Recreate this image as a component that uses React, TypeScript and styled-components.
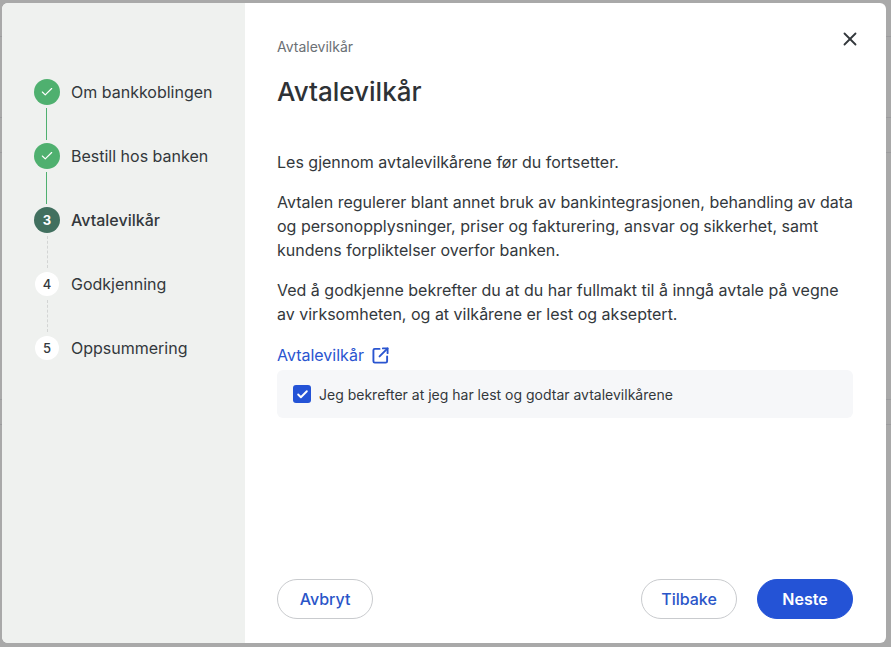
import React from "react";
import styled, { createGlobalStyle } from "styled-components";
import { Check, X } from "lucide-react";

const Global = createGlobalStyle`
  html, body { margin: 0; padding: 0; height: 100%; }
  body { background: #a9a9a9; font-family: Inter, "Liberation Sans", sans-serif; overflow: hidden; }
`;

const line = (y: number) =>
  `linear-gradient(#9c9c9e, #9c9c9e) 0 ${y}px / 100% 1px no-repeat`;

const Backdrop = styled.div`
  width: 891px;
  height: 647px;
  box-sizing: border-box;
  padding: 3px 5px 4px 2px;
  display: flex;
  background: ${[36, 117, 152, 399, 424].map(line).join(", ")}, #a9a9a9;
`;

const Modal = styled.div`
  flex: 1;
  display: flex;
  background: #fff;
  border-radius: 6px;
  overflow: hidden;
  position: relative;
`;

const Sidebar = styled.aside`
  width: 243px;
  flex: none;
  background: #eff1ef;
  box-sizing: border-box;
  padding: 76px 0 0 32px;
  display: flex;
  flex-direction: column;
`;

const Step = styled.div`
  display: flex;
  gap: 11px;
  height: 64px;
`;

const Rail = styled.div`
  width: 26px;
  display: flex;
  flex-direction: column;
  align-items: center;
`;

type Status = "done" | "current" | "todo";

const DotSlot = styled.div`
  width: 26px;
  height: 26px;
  flex: none;
  display: flex;
  align-items: center;
  justify-content: center;
`;

const Dot = styled.div<{ $status: Status }>`
  width: ${(p) => (p.$status === "todo" ? 24 : 26)}px;
  height: ${(p) => (p.$status === "todo" ? 24 : 26)}px;
  box-sizing: border-box;
  border-radius: 50%;
  display: flex;
  align-items: center;
  justify-content: center;
  font-size: 13px;
  font-weight: ${(p) => (p.$status === "current" ? 700 : 500)};
  color: ${(p) => (p.$status === "todo" ? "#33383c" : "#fff")};
  background: ${(p) =>
    p.$status === "done" ? "#4fb06f" : p.$status === "current" ? "#41705f" : "#fff"};
`;

const SolidConnector = styled.div`
  flex: 1;
  margin: 3px 0;
  width: 2px;
  background: linear-gradient(90deg, #4fb06f 50%, transparent 50%);
`;

const DashedConnector = styled.div`
  flex: 1;
  margin: 3px 0;
  width: 0;
  border-left: 1px dashed #d3d5d4;
`;

const StepLabel = styled.div<{ $current: boolean }>`
  font-size: 16px;
  line-height: 26px;
  color: #33383c;
  font-weight: ${(p) => (p.$current ? 500 : 400)};
`;

const Main = styled.main`
  flex: 1;
  box-sizing: border-box;
  padding: 36px 33px 24px 32px;
  display: flex;
  flex-direction: column;
`;

const Eyebrow = styled.div`
  font-size: 14px;
  line-height: 16px;
  color: #6b7075;
`;

const Title = styled.h1`
  margin: 20px 0 0;
  font-size: 26px;
  line-height: 34px;
  font-weight: 500;
  color: #2e3236;
`;

const Body = styled.div`
  margin: 41px -2px 0 0;
  display: flex;
  flex-direction: column;
  gap: 16px;
`;

const Paragraph = styled.p`
  margin: 0;
  font-size: 16px;
  line-height: 24px;
  color: #33383c;
`;

const TermsLink = styled.a`
  margin-top: 17px;
  display: flex;
  align-items: center;
  gap: 8px;
  font-size: 16px;
  line-height: 24px;
  color: #2a55d0;
`;

const ConfirmBox = styled.label`
  margin-top: 3px;
  height: 48px;
  box-sizing: border-box;
  padding: 0 16px;
  display: flex;
  align-items: center;
  gap: 8px;
  background: #f6f7f9;
  border-radius: 6px;
  font-size: 14px;
  color: #33383c;
`;

const CheckBox = styled.span`
  width: 18px;
  height: 18px;
  border-radius: 3px;
  background: #2453d6;
  display: flex;
  align-items: center;
  justify-content: center;
  color: #fff;
`;

const Footer = styled.div`
  margin-top: auto;
  display: flex;
  align-items: center;
  gap: 20px;
`;

const Button = styled.button<{ $primary?: boolean }>`
  width: 96px;
  height: 40px;
  border-radius: 20px;
  font-family: inherit;
  font-size: 16px;
  padding: 0;
  border: 1px solid ${(p) => (p.$primary ? "#2453d6" : "#c9cbce")};
  background: ${(p) => (p.$primary ? "#2453d6" : "#fff")};
  color: ${(p) => (p.$primary ? "#fff" : "#2a55c8")};
  font-weight: ${(p) => (p.$primary ? 600 : 500)};
`;

const Spacer = styled.div`
  flex: 1;
`;

const Close = styled.button`
  position: absolute;
  top: 24px;
  right: 24px;
  width: 24px;
  height: 24px;
  padding: 0;
  border: 0;
  background: none;
  color: #33383c;
  display: flex;
  align-items: center;
  justify-content: center;
`;

const OpenIcon = () => (
  <svg
    width="17"
    height="17"
    viewBox="0 0 18 18"
    fill="none"
    stroke="currentColor"
    strokeWidth="2"
    strokeLinecap="round"
    strokeLinejoin="round"
  >
    <path d="M8 2H3a1.5 1.5 0 0 0-1.5 1.5v11.5A1.5 1.5 0 0 0 3 16.5h11.5a1.5 1.5 0 0 0 1.5-1.5V10" />
    <path d="M11.5 1.5h5v5" />
    <path d="M16.5 1.5 8 10" />
  </svg>
);

const steps: { n: number; label: string; status: Status }[] = [
  { n: 1, label: "Om bankkoblingen", status: "done" },
  { n: 2, label: "Bestill hos banken", status: "done" },
  { n: 3, label: "Avtalevilkår", status: "current" },
  { n: 4, label: "Godkjenning", status: "todo" },
  { n: 5, label: "Oppsummering", status: "todo" },
];

export default function App() {
  return (
    <Backdrop>
      <Global />
      <Modal>
        <Sidebar>
          {steps.map((s, i) => (
            <Step key={s.n}>
              <Rail>
                <DotSlot>
                  <Dot $status={s.status}>
                    {s.status === "done" ? <Check size={14} strokeWidth={2} /> : s.n}
                  </Dot>
                </DotSlot>
                {i < steps.length - 1 &&
                  (s.status === "done" ? <SolidConnector /> : <DashedConnector />)}
              </Rail>
              <StepLabel $current={s.status === "current"}>{s.label}</StepLabel>
            </Step>
          ))}
        </Sidebar>
        <Main>
          <Eyebrow>Avtalevilkår</Eyebrow>
          <Title>Avtalevilkår</Title>
          <Body>
            <Paragraph>Les gjennom avtalevilkårene før du fortsetter.</Paragraph>
            <Paragraph>
              Avtalen regulerer blant annet bruk av bankintegrasjonen, behandling av data og
              personopplysninger, priser og fakturering, ansvar og sikkerhet, samt kundens
              forpliktelser overfor banken.
            </Paragraph>
            <Paragraph>
              Ved å godkjenne bekrefter du at du har fullmakt til å inngå avtale på vegne av
              virksomheten, og at vilkårene er lest og akseptert.
            </Paragraph>
          </Body>
          <TermsLink>
            Avtalevilkår <OpenIcon />
          </TermsLink>
          <ConfirmBox>
            <CheckBox>
              <Check size={13} strokeWidth={3.5} />
            </CheckBox>
            Jeg bekrefter at jeg har lest og godtar avtalevilkårene
          </ConfirmBox>
          <Footer>
            <Button>Avbryt</Button>
            <Spacer />
            <Button>Tilbake</Button>
            <Button $primary>Neste</Button>
          </Footer>
        </Main>
        <Close aria-label="Lukk">
          <X size={22} strokeWidth={2} />
        </Close>
      </Modal>
    </Backdrop>
  );
}
